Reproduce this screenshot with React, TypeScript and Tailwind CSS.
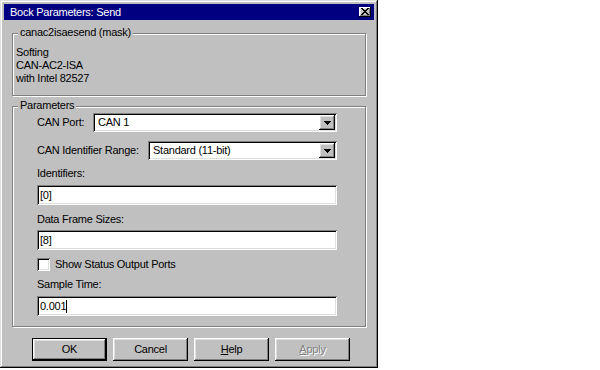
import type { ReactNode } from "react";

const sunken =
    "shadow-[inset_1px_1px_#808080,inset_-1px_-1px_#fff,inset_2px_2px_#000,inset_-2px_-2px_#dfdfdf]";
const raised =
    "shadow-[inset_-1px_-1px_#000,inset_1px_1px_#fff,inset_-2px_-2px_#808080,inset_2px_2px_#dfdfdf]";

function Group({ title, className, children }: { title: string; className?: string; children: ReactNode }) {
    return (
        <div className={`relative border border-[#808080] shadow-[inset_1px_1px_#fff,1px_1px_#fff] ${className ?? ""}`}>
            <span className="absolute -top-[8px] left-[5px] px-[2px] bg-[#c0c0c0] leading-[13px]">{title}</span>
            {children}
        </div>
    );
}

function Combo({ value, width }: { value: string; width: string }) {
    return (
        <div className={`${width} h-[19px] bg-white flex items-center ${sunken}`}>
            <span className="flex-1 pl-[5px] leading-[13px]">{value}</span>
            <div className={`w-[16px] h-[15px] mr-[2px] bg-[#c0c0c0] grid place-items-center ${raised}`}>
                <svg width="7" height="4" viewBox="0 0 7 4" shapeRendering="crispEdges">
                    <path d="M0 0h7v1H0z M1 1h5v1H1z M2 2h3v1H2z M3 3h1v1H3z" fill="#000" />
                </svg>
            </div>
        </div>
    );
}

function TextField({ children }: { children: ReactNode }) {
    return (
        <div className={`w-[300px] h-[20px] bg-white flex items-center pl-[3px] ${sunken}`}>
            {children}
        </div>
    );
}

function Button({ children, isDefault, disabled }: { children: ReactNode; isDefault?: boolean; disabled?: boolean }) {
    return (
        <button
            className={`w-[75px] h-[23px] bg-[#c0c0c0] grid place-items-center leading-[13px] ${raised} ${isDefault ? "outline outline-1 outline-black -outline-offset-1 shadow-[inset_-2px_-2px_#000,inset_2px_2px_#fff,inset_-3px_-3px_#808080,inset_3px_3px_#dfdfdf]" : ""} ${disabled ? "text-[#808080] [text-shadow:1px_1px_#fff]" : ""}`}
        >
            {children}
        </button>
    );
}

export default function App() {
    return (
        <div className="min-h-screen bg-white text-black text-[11px] tracking-[-0.25px] font-['Liberation_Sans',Arial,sans-serif]">
            <div className="w-[378px] h-[368px] bg-[#c0c0c0] p-[4px] flex flex-col shadow-[inset_-1px_-1px_#000,inset_1px_1px_#dfdfdf,inset_-2px_-2px_#808080,inset_2px_2px_#fff]">
                <div className="h-[16px] bg-[#000080] text-white flex items-center justify-between pl-[6px] pr-[3px]">
                    <span className="leading-[13px]">Bock Parameters: Send</span>
                    <div className={`w-[12px] h-[10px] bg-[#c0c0c0] grid place-items-center ${raised}`}>
                        <svg width="8" height="7" viewBox="0 0 8 7" shapeRendering="crispEdges" className="-mt-px">
                            <path
                                d="M0 0h2v1H0z M6 0h2v1H6z M1 1h2v1H1z M5 1h2v1H5z M2 2h4v1H2z M3 3h2v1H3z M2 4h4v1H2z M1 5h2v1H1z M5 5h2v1H5z M0 6h2v1H0z M6 6h2v1H6z"
                                fill="#000"
                            />
                        </svg>
                    </div>
                </div>

                <div className="px-[8px] flex flex-col">
                    <Group title="canac2isaesend (mask)" className="mt-[13px] pt-[12px] pb-[10px] pl-[3px]">
                        <div className="leading-[13px]">
                            <div>Softing</div>
                            <div>CAN-AC2-ISA</div>
                            <div>with Intel 82527</div>
                        </div>
                    </Group>

                    <Group title="Parameters" className="mt-[10px] pt-[6px] pb-[10px] pl-[24px]">
                        <div className="flex items-center h-[19px]">
                            <span className="w-[56px]">CAN Port:</span>
                            <Combo value="CAN 1" width="w-[244px]" />
                        </div>
                        <div className="flex items-center h-[19px] mt-[9px]">
                            <span className="w-[111px]">CAN Identifier Range:</span>
                            <Combo value="Standard (11-bit)" width="w-[189px]" />
                        </div>
                        <div className="leading-[13px] mt-[7px]">Identifiers:</div>
                        <div className="mt-[5px]">
                            <TextField>[0]</TextField>
                        </div>
                        <div className="leading-[13px] mt-[8px]">Data Frame Sizes:</div>
                        <div className="mt-[4px]">
                            <TextField>[8]</TextField>
                        </div>
                        <div className="flex items-center gap-[5px] mt-[8px] h-[13px]">
                            <div className={`w-[13px] h-[13px] bg-white ${sunken}`} />
                            <span>Show Status Output Ports</span>
                        </div>
                        <div className="leading-[13px] mt-[7px]">Sample Time:</div>
                        <div className="mt-[5px]">
                            <TextField>
                                <span>0.001</span>
                                <span className="inline-block w-px h-[13px] bg-black" />
                            </TextField>
                        </div>
                    </Group>

                    <div className="flex gap-[6px] ml-[20px] mt-[11px]">
                        <Button isDefault>OK</Button>
                        <Button>Cancel</Button>
                        <Button>
                            <span>
                                <span className="underline">H</span>elp
                            </span>
                        </Button>
                        <Button disabled>
                            <span>
                                <span className="underline">A</span>pply
                            </span>
                        </Button>
                    </div>
                </div>
            </div>
        </div>
    );
}
